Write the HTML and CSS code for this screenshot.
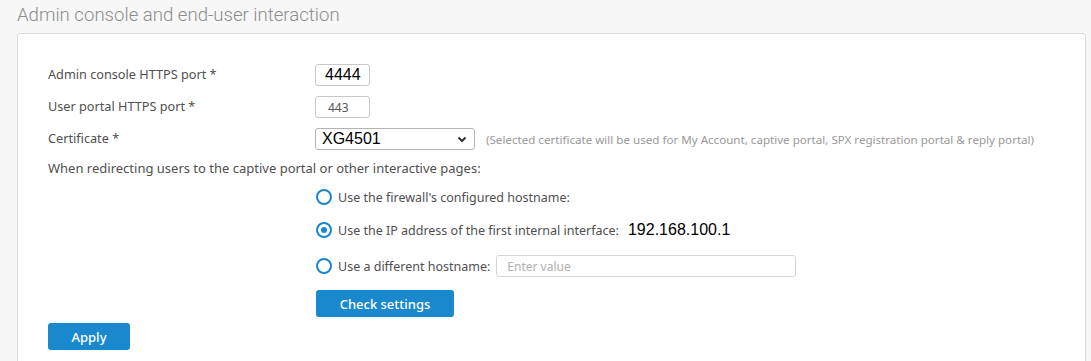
FILE: index.html
```html
<!DOCTYPE html>
<html lang="en">
<head>
    <meta charset="UTF-8">
    <meta name="viewport" content="width=device-width, initial-scale=1.0">
    <title>Admin console and end-user interaction</title>
    <link rel="stylesheet" href="styles.css">
</head>
<body>
    <h2 class="section-title">Admin console and end-user interaction</h2>

    <div class="panel">
        <div class="form-row">
            <label class="field-label">Admin console HTTPS port *</label>
            <input class="port-input big" type="text" value="4444">
        </div>
        <div class="form-row">
            <label class="field-label">User portal HTTPS port *</label>
            <input class="port-input" type="text" value="443">
        </div>
        <div class="form-row">
            <label class="field-label">Certificate *</label>
            <div class="select-box">
                <span>XG4501</span>
                <svg class="chevron" width="10" height="7" viewBox="0 0 10 7">
                    <path d="M1.5 1.5 L5 5 L8.5 1.5" fill="none" stroke="#333" stroke-width="2"/>
                </svg>
            </div>
            <span class="hint">(Selected certificate will be used for My Account, captive portal, SPX registration portal &amp; reply portal)</span>
        </div>

        <div class="redirect-text">When redirecting users to the captive portal or other interactive pages:</div>

        <div class="options">
            <div class="radio-row first">
                <span class="radio"></span>
                <span>Use the firewall's configured hostname:</span>
            </div>
            <div class="radio-row second">
                <span class="radio checked"></span>
                <span>Use the IP address of the first internal interface:</span>
                <span class="ip-value">192.168.100.1</span>
            </div>
            <div class="radio-row third">
                <span class="radio"></span>
                <span>Use a different hostname:</span>
                <input class="host-input" type="text" placeholder="Enter value">
            </div>
            <button class="btn check-btn">Check settings</button>
        </div>

        <button class="btn apply-btn">Apply</button>
    </div>
</body>
</html>
```

FILE: styles.css
```css
body {
    margin: 0;
    padding: 0 5px 0 17px;
    font-family: 'Noto Sans', sans-serif;
    font-size: 13px;
    color: #505050;
    background-color: #f7f7f7;
    overflow: hidden;
}

.section-title {
    margin: 0;
    height: 33px;
    line-height: 31px;
    font-family: 'Roboto', sans-serif;
    font-weight: 300;
    font-size: 18.6px;
    color: #8c8c8c;
}

.panel {
    background: #fff;
    border: 1px solid #dcdcdc;
    border-radius: 3px;
    padding: 30px 30px 8px;
    height: 294px;
}

.form-row {
    display: flex;
    align-items: center;
    height: 22px;
    margin-bottom: 10px;
}

.field-label {
    width: 267px;
    flex-shrink: 0;
    margin-top: -3px;
    font-size: 12.7px;
}

.port-input {
    box-sizing: border-box;
    width: 55px;
    height: 22px;
    border: 1px solid #c8c8c8;
    border-radius: 3px;
    padding: 0 0 0 12px;
    font-family: 'Noto Sans', sans-serif;
    font-size: 12px;
    color: #555;
}

.port-input.big {
    padding-left: 9px;
    font-family: 'Liberation Sans', sans-serif;
    font-size: 16px;
    color: #000;
}

.select-box {
    box-sizing: border-box;
    width: 160px;
    height: 22px;
    border: 1px solid #b4b4b4;
    border-radius: 3px;
    display: flex;
    align-items: center;
    justify-content: space-between;
    padding: 0 7px 0 6px;
    font-family: 'Liberation Sans', sans-serif;
    font-size: 16px;
    color: #000;
}

.hint {
    margin-left: 11px;
    font-size: 11.6px;
    color: #999;
}

.redirect-text {
    height: 20px;
    line-height: 20px;
    margin-top: -2px;
    margin-bottom: 9px;
}

.options {
    padding-left: 268px;
    font-size: 12.5px;
}

.radio-row {
    display: flex;
    align-items: center;
    height: 20px;
}

.radio-row.first {
    margin-bottom: 13px;
}

.radio-row.second {
    margin-bottom: 15px;
}

.radio-row.third {
    height: 22px;
    margin-bottom: 13px;
}

.radio {
    box-sizing: border-box;
    width: 16px;
    height: 16px;
    border: 2px solid #1b87cb;
    border-radius: 50%;
    margin-right: 6px;
    display: flex;
    align-items: center;
    justify-content: center;
    flex-shrink: 0;
}

.radio.checked::after {
    content: '';
    width: 6px;
    height: 6px;
    border-radius: 50%;
    background: #1b87cb;
}

.ip-value {
    margin-left: 9px;
    font-family: 'Liberation Sans', sans-serif;
    font-size: 16px;
    color: #000;
}

.host-input {
    box-sizing: border-box;
    width: 300px;
    height: 22px;
    margin-left: 6px;
    border: 1px solid #d4d4d4;
    border-radius: 3px;
    padding: 0 10px;
    font-family: 'Noto Sans', sans-serif;
    font-size: 12px;
}

.host-input::placeholder {
    color: #b0b0b0;
}

.btn {
    display: block;
    height: 27px;
    border: none;
    border-radius: 3px;
    background: #1a88cc;
    color: #fff;
    font-family: 'Noto Sans', sans-serif;
    font-size: 13px;
    font-weight: 500;
    cursor: pointer;
}

.check-btn {
    width: 138px;
    margin-bottom: 6px;
}

.apply-btn {
    width: 82px;
}
```
